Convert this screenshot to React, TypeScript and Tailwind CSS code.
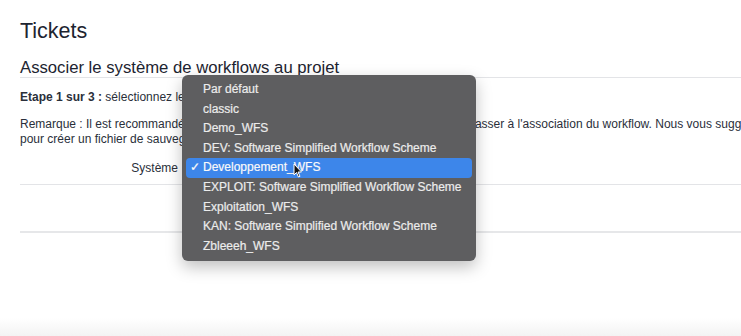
import React from "react";

const items = [
  "Par défaut",
  "classic",
  "Demo_WFS",
  "DEV: Software Simplified Workflow Scheme",
  "Developpement_WFS",
  "EXPLOIT: Software Simplified Workflow Scheme",
  "Exploitation_WFS",
  "KAN: Software Simplified Workflow Scheme",
  "Zbleeeh_WFS",
];

export default function App() {
  return (
    <div
      className="relative w-[741px] h-[336px] overflow-hidden bg-white text-[#2a2f3a]"
      style={{ fontFamily: '"Liberation Sans", Arial, sans-serif' }}
    >
      <div className="w-[1000px] pl-[20px] pt-[18px]">
        <h1 className="text-[21.5px] leading-[26px] text-[#1d2430]">Tickets</h1>
        <h2 className="mt-[15px] text-[16.7px] leading-[18px] text-[#1d2430] border-b border-[#e3e4e7]">
          Associer le système de workflows au projet
        </h2>
        <p className="mt-[11px] text-[12px] leading-[16px]">
          <span className="font-bold">Etape 1 sur 3 :</span> sélectionnez le système de workflows
        </p>
        <p className="mt-[12px] text-[12px] leading-[15px] whitespace-nowrap">
          Remarque : Il est recommandé de sauvegarder votre instance Jira Service avant de passer à l'association du workflow. Nous vous suggérons d'utiliser l'outil de sauvegarde
          <br />
          pour créer un fichier de sauvegarde de votre instance.
        </p>
        <div className="mt-[13px] h-[25px] border-b border-[#e3e4e7]">
          <div className="w-[158px] text-right text-[12px] leading-[16px]">Système</div>
        </div>
        <div className="h-[48px] border-b-2 border-[#e6e7e9]" />
      </div>
      <div className="absolute left-0 right-0 bottom-0 h-[18px] bg-gradient-to-b from-white to-[#f3f3f3]" />

      <div className="absolute left-[182px] top-[75px] w-[294px] rounded-[6px] bg-[#5e5e60] px-[4px] py-[5px] shadow-[0_6px_16px_rgba(0,0,0,0.25)] text-[12px] text-[#ececec] whitespace-nowrap [-webkit-text-stroke:0.2px_#ececec]">
        {items.map((it, i) => {
          const sel = i === 4;
          return (
            <div
              key={it}
              className={`relative h-[19.6px] leading-[19.6px] pl-[17px] rounded-[4px] ${sel ? "bg-[#3d86ea] text-white" : ""}`}
            >
              {sel && <span className="absolute left-[4px] top-0">✓</span>}
              {it}
            </div>
          );
        })}
      </div>
      <svg className="absolute left-[293px] top-[163px]" width="10" height="15" viewBox="0 0 10 15">
        <path d="M1 1 L1 12 L3.5 9.5 L5.5 14 L7 13.3 L5 9 L8.5 9 Z" fill="#111" stroke="#fff" strokeWidth="1" />
      </svg>
    </div>
  );
}
